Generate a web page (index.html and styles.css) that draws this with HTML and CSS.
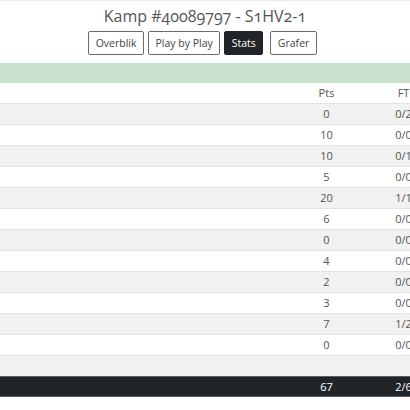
FILE: index.html
```html
<!DOCTYPE html>
<html>
<head>
<meta charset="utf-8">
<link rel="stylesheet" href="styles.css">
</head>
<body>
<div class="topline"></div>
<h1 class="title">Kamp #40089797 - S1HV2-1</h1>
<nav class="tabs">
  <a class="btn">Overblik</a>
  <a class="btn">Play by Play</a>
  <a class="btn active">Stats</a>
  <a class="btn">Grafer</a>
</nav>
<div class="greenbar"></div>
<table class="stats">
  <colgroup><col class="c-name"><col class="c-num"><col class="c-num"></colgroup>
  <thead><tr><th></th><th>Pts</th><th>FT</th></tr></thead>
  <tbody>
    <tr><td></td><td>0</td><td>0/2</td></tr>
    <tr><td></td><td>10</td><td>0/0</td></tr>
    <tr><td></td><td>10</td><td>0/1</td></tr>
    <tr><td></td><td>5</td><td>0/0</td></tr>
    <tr><td></td><td>20</td><td>1/1</td></tr>
    <tr><td></td><td>6</td><td>0/0</td></tr>
    <tr><td></td><td>0</td><td>0/0</td></tr>
    <tr><td></td><td>4</td><td>0/0</td></tr>
    <tr><td></td><td>2</td><td>0/0</td></tr>
    <tr><td></td><td>3</td><td>0/0</td></tr>
    <tr><td></td><td>7</td><td>1/2</td></tr>
    <tr><td></td><td>0</td><td>0/0</td></tr>
    <tr><td></td><td></td><td></td></tr>
  </tbody>
  <tfoot><tr><td></td><td>67</td><td>2/6</td></tr></tfoot>
</table>
</body>
</html>
```
FILE: styles.css
```css
html, body {
  margin: 0;
  padding: 0;
  background: #fff;
  overflow: hidden;
}
body {
  font-family: "Open Sans", "Liberation Sans", sans-serif;
  color: #555;
  width: 410px;
}
.topline {
  height: 1px;
  background: #e6eef5;
}
.title {
  margin: 4px 0 0 0;
  font-family: "Open Sans", sans-serif;
  font-weight: 400;
  font-size: 16px;
  line-height: 22px;
  text-align: center;
  color: #555;
  font-feature-settings: "onum";
}
.tabs {
  display: flex;
  justify-content: center;
  gap: 4px;
  margin-top: 4px;
  padding-right: 5px;
}
.btn {
  display: block;
  box-sizing: border-box;
  height: 24px;
  padding: 0 6.5px;
  border: 1px solid #6c6c6c;
  border-radius: 2px;
  font-size: 10.5px;
  line-height: 22px;
  color: #444;
  background: #fff;
}
.btn.active {
  background: #212529;
  border-color: #212529;
  color: #fff;
  margin-right: 3px;
}
.greenbar {
  margin-top: 8px;
  height: 20px;
  background: #c8e1cf;
}
.stats {
  border-collapse: collapse;
  table-layout: fixed;
  width: 442px;
  font-size: 11px;
  color: #555;
}
.c-name { width: 288px; }
.c-num { width: 77px; }
.stats th, .stats td {
  height: 20px;
  padding: 0;
  line-height: 16px;
  text-align: center;
  font-weight: 400;
  border-top: 1px solid #e3e3e3;
}
.stats thead th {
  border-top: none;
  height: 20px;
  vertical-align: middle;
}
.stats tbody tr:nth-child(odd) td {
  background: #f1f1f1;
}
.stats tfoot td {
  background: #212529;
  color: #fff;
  border-top: 1px solid #5a5f64;
  border-bottom: 1px solid #5a5f64;
  height: 19px;
}
```
